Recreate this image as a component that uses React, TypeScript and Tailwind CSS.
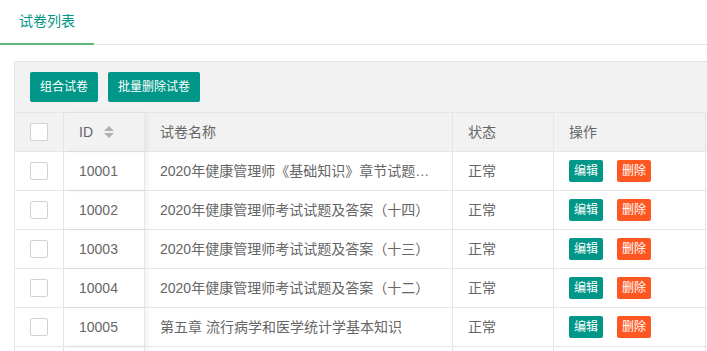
const rows = [
  { id: "10001", name: "2020年健康管理师《基础知识》章节试题及答案汇总", status: "正常" },
  { id: "10002", name: "2020年健康管理师考试试题及答案（十四）", status: "正常" },
  { id: "10003", name: "2020年健康管理师考试试题及答案（十三）", status: "正常" },
  { id: "10004", name: "2020年健康管理师考试试题及答案（十二）", status: "正常" },
  { id: "10005", name: "第五章 流行病学和医学统计学基本知识", status: "正常" },
  { id: "10006", name: "第四章 基础医学基本知识", status: "正常" },
];

const cols = "grid grid-cols-[49px_81px_308px_101px_152px]";
const cell = "flex items-center px-[15px] border-r border-[#e6e6e6] overflow-hidden";

function Checkbox() {
  return <span className="block w-[18px] h-[18px] border border-[#d2d2d2] rounded-[2px] bg-white" />;
}

function SortIcon() {
  return (
    <span className="ml-[11px] flex flex-col gap-[2px]">
      <span className="block w-0 h-0 border-x-[5px] border-x-transparent border-b-[5px] border-b-[#b2b2b2]" />
      <span className="block w-0 h-0 border-x-[5px] border-x-transparent border-t-[5px] border-t-[#b2b2b2]" />
    </span>
  );
}

export default function App() {
  return (
    <div
      className="w-[707px] h-[351px] overflow-hidden bg-white text-[#666] text-[14px]"
      style={{ fontFamily: '"Liberation Sans", "Noto Sans CJK SC", sans-serif' }}
    >
      <div className="flex border-b border-[#e6e6e6] h-[45px]">
        <div className="w-[94px] h-[45px] -mb-px border-b-2 border-[#5fb878] flex items-center justify-center text-[#009688]">
          试卷列表
        </div>
      </div>

      <div className="ml-[14px] mt-[16px] w-[720px] border-l border-t border-[#e6e6e6]">
        <div className="bg-[#f2f2f2] px-[15px] py-[10px] flex gap-[10px] border-b border-[#e6e6e6]">
          <button className="h-[30px] px-[10px] bg-[#009688] text-white text-[12px] rounded-[2px]">组合试卷</button>
          <button className="h-[30px] px-[10px] bg-[#009688] text-white text-[12px] rounded-[2px]">批量删除试卷</button>
        </div>

        <div className={`${cols} h-[39px] bg-[#f2f2f2] border-b border-[#e6e6e6]`}>
          <div className={cell}>
            <Checkbox />
          </div>
          <div className={`${cell} shadow-[3px_0_6px_rgba(0,0,0,0.05)]`}>
            ID
            <SortIcon />
          </div>
          <div className={cell}>试卷名称</div>
          <div className={cell}>状态</div>
          <div className={cell}>操作</div>
        </div>

        {rows.map((r) => (
          <div key={r.id} className={`${cols} h-[39px] border-b border-[#e6e6e6] bg-white`}>
            <div className={cell}>
              <Checkbox />
            </div>
            <div className={`${cell} shadow-[3px_0_6px_rgba(0,0,0,0.05)]`}>{r.id}</div>
            <div className={cell}>
              <span className="truncate">{r.name}</span>
            </div>
            <div className={cell}>{r.status}</div>
            <div className={`${cell} gap-[14px]`}>
              <button className="h-[22px] px-[5px] bg-[#009688] text-white text-[12px] rounded-[2px]">编辑</button>
              <button className="h-[22px] px-[5px] bg-[#ff5722] text-white text-[12px] rounded-[2px]">删除</button>
            </div>
          </div>
        ))}
      </div>
    </div>
  );
}
